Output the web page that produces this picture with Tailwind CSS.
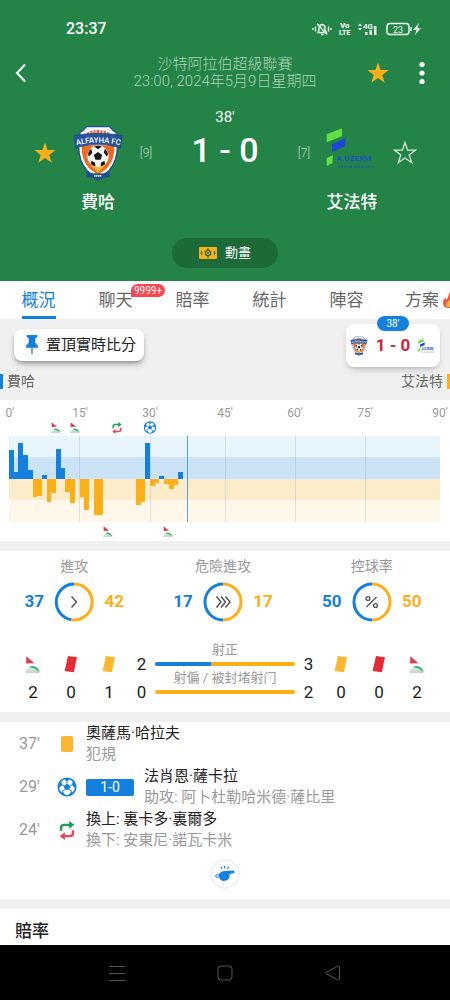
<!DOCTYPE html>
<html lang="zh-Hant">

<head>
    <meta charset="UTF-8">
    <meta name="viewport" content="width=device-width, initial-scale=1.0">
    <title>費哈 1 - 0 艾法特</title>

    <!-- Tailwind CSS -->
    <script src="https://cdn.jsdelivr.net/npm/@tailwindcss/browser@4"></script>
</head>

<body class="min-h-screen flex flex-col overflow-x-hidden bg-[#f0f0f0] text-[#222] font-['Roboto','Noto_Sans_CJK_TC',sans-serif]">

    <!-- Shared icons -->
    <svg class="hidden" aria-hidden="true">
        <symbol id="star" viewBox="0 0 24 24">
            <path d="M12 1.5l2.6 7.6h8L16.200 13.900l2.500 7.800L12 17l-6.700 4.700 2.500-7.800L1.400 9.100h8z" />
        </symbol>

        <symbol id="crest" viewBox="0 0 156 180">
            <path fill="#fff" stroke="#1f4f93" stroke-width="4" d="M42 8h72q8 12 20 18l4 44q0 46-26 74-16 16-34 28-18-12-34-28-26-28-26-74l4-44q12-6 20-18z" />
            <path fill="#e2632b" d="M44 26q34-14 68 0v8H44z" />
            <path stroke="#fff" stroke-width="3" d="M52 16v18M62 14v18M72 12v18M84 12v18M94 14v18M104 16v18" />
            <path fill="#f26a21" d="M27 66h102q2 46-24 72l-27 20-27-20Q25 112 27 66z" />
            <path fill="#f7b733" d="M56 128h44l-22 24z" />
            <circle cx="78" cy="100" r="33" fill="#fff" />
            <g fill="#151515">
                <path d="M78 87l13 9-5 15H70l-5-15z" />
                <path d="M66 70q12-5 24 0l-12 8zM47 92q3-10 10-15l3 12-10 13zM109 92q-3-10-10-15l-3 12 10 13zM56 124q6 6 14 8l-1-12-11-6zM100 124q-6 6-14 8l1-12 11-6z" />
            </g>
            <path fill="#27549d" stroke="#1a3f7e" stroke-width="2" d="M4 36q74-14 148 0l-5 40q-8-6-16-6-53-14-106 0-8 0-16 6z" />
            <path id="band" fill="none" d="M8 67q70-18 142 0" />
            <text font-size="24" font-weight="500" fill="#fff" text-anchor="middle"><textPath href="#band" startOffset="50%">ALFAYHA FC</textPath></text>
            <path fill="#1f4f93" d="M42 148q36 12 72 0v16q-18 2-36 12-18-10-36-12z" />
            <path stroke="#fff" stroke-width="5" stroke-dasharray="4 2" d="M66 161h24" />
        </symbol>

        <symbol id="striped" viewBox="0 0 156 132">
            <path fill="#63dd45" d="M2 22L48 4v24L2 46zM2 93l19-8-2 24-17 8z" />
            <path fill="#1d45d8" d="M18 52l40-18v23L18 75z" />
            <text x="32" y="101" font-size="24" font-weight="700" fill="#1d4fc4">A.UZEXM</text>
            <path stroke="#1d4fc4" stroke-width="6" stroke-dasharray="8 3 4 2" opacity=".6" d="M36 119h108" />
        </symbol>

        <symbol id="ball" viewBox="0 0 24 24">
            <circle cx="12" cy="12" r="10.500" fill="#fff" stroke="#1280dc" stroke-width="2" />
            <path fill="#1280dc" d="M12 7.800l4 2.900-1.500 4.700h-5L8 10.700zM8 2.200h8L12 5.500zM1.500 9.500L5 5l1.200 4.600L2 13.500zM22.500 9.500L19 5l-1.200 4.600L22 13.500zM5 20.500l1-4.500 4 5.800zM19 20.500l-1-4.500-4 5.800z" />
            <path fill="none" stroke="#1280dc" stroke-width="1.200" d="M12 5v3M6 9.500l2.200 1.200M18 9.500l-2.200 1.200M6.500 17l3-2M17.500 17l-3-2" />
        </symbol>

        <symbol id="swap" viewBox="0 0 44 54">
            <path fill="none" stroke="#22985a" stroke-width="7" d="M5 28v-8q0-9 9-9h18" />
            <path fill="#22985a" d="M28 0l15 11-15 11z" />
            <path fill="none" stroke="#ea4658" stroke-width="7" d="M39 26v8q0 9-9 9H12" />
            <path fill="#ea4658" d="M16 32L1 43l15 11z" />
        </symbol>

        <symbol id="corner" viewBox="0 0 48 52">
            <path fill="#e04050" d="M3 1l26 21-26 1z" />
            <path fill="#d5e9dc" d="M0 51q2-15 20-21 24 4 28 21z" />
            <path fill="#43b274" d="M12 34q10-7 22 0 9 6 10 16-9-10-32-16z" />
            <path fill="none" stroke="#b5bab7" stroke-width="2" d="M3 50q14-10 38 0z" />
        </symbol>

        <symbol id="card" viewBox="0 0 14 18">
            <path d="M4 1l9 1.200-3.200 15L.6 16z" />
        </symbol>
    </svg>

    <header class="bg-[#248347] text-white pb-[13px]">
        <!-- Status bar -->
        <div class="h-14 pt-[2px] flex items-center justify-between pl-[66px] pr-7">
            <span class="text-base font-medium">23:37</span>
            <div class="flex items-center gap-2 text-[#eaf8ee]">
                <svg class="w-5 h-4" viewBox="0 0 20 16" fill="none" stroke="currentColor" stroke-width="1.400">
                    <path d="M1 7v2M3.500 5.500v5M16.500 5.500v5M19 7v2M6 11.500h8.500L13 9V7q0-3-3-3.500Q7 4 7 7v2zM9 13.500h2.500M5 2.500l10 11" />
                </svg>
                <svg class="w-[10px] h-4 overflow-visible" viewBox="0 0 10 16" fill="currentColor" font-weight="900">
                    <text x="0" y="7" font-size="8">Vo</text>
                    <text x="-1" y="14" font-size="7">LTE</text>
                </svg>
                <svg class="w-5 h-4" viewBox="0 0 20 16" fill="currentColor" font-weight="700">
                    <path d="M0 5l2-2.500L4 5zM0 7l2 2.500L4 7zM7 11h2.500v3H7zM11.500 9H14v5h-2.500zM16 5h2.500v9H16z" />
                    <text x="5" y="8" font-size="8">4G</text>
                </svg>
                <svg class="w-9 h-4" viewBox="0 0 36 16" fill="none" stroke="currentColor">
                    <rect x="1" y="2.500" width="22" height="11" rx="3" stroke-width="1.500" />
                    <path stroke-width="1.500" d="M25 6v4" />
                    <text x="12" y="11.500" font-size="9" text-anchor="middle" fill="currentColor" stroke="none">23</text>
                    <path fill="currentColor" stroke="none" d="M33 2l-6 7h3.500L29 14l6-7h-3.500z" />
                </svg>
            </div>
        </div>

        <!-- League and kick-off -->
        <div class="grid grid-cols-[88px_1fr_88px] items-center">
            <button type="button" aria-label="返回" class="w-11 h-8 pl-3 cursor-pointer">
                <svg class="w-5 h-5" viewBox="0 0 20 20" fill="none" stroke="#fff" stroke-width="2">
                    <path d="M13 1.500L5 10l8 8.500" />
                </svg>
            </button>
            <p class="text-center text-[15px] leading-[17px] font-light text-[#a9d3b6] whitespace-nowrap">沙特阿拉伯超級聯賽<br>23:00, 2024年5月9日星期四</p>
            <div class="flex justify-between items-center pl-1 pr-5">
                <button type="button" aria-label="收藏比賽" class="cursor-pointer"><svg class="w-6 h-6 fill-[#fdaf17]"><use href="#star" /></svg></button>
                <button type="button" aria-label="更多" class="cursor-pointer">
                    <svg class="w-4 h-6 fill-white" viewBox="0 0 16 24">
                        <circle cx="8" cy="3.500" r="2.600" />
                        <circle cx="8" cy="12" r="2.600" />
                        <circle cx="8" cy="20.500" r="2.600" />
                    </svg>
                </button>
            </div>
        </div>

        <!-- Score -->
        <p class="mt-5 text-center text-[15px] leading-[14px]">38'</p>
        <div class="grid grid-cols-[22px_84px_12px_1fr_12px_84px_22px] items-center justify-items-center px-[34px]">
            <button type="button" aria-label="收藏費哈" class="cursor-pointer"><svg class="w-6 h-6 fill-[#fdaf17]"><use href="#star" /></svg></button>
            <svg class="w-[54px] h-[58px]"><use href="#crest" /></svg>
            <span class="text-xs font-light text-[#b9dcc4]">[9]</span>
            <strong class="self-start text-[34px] leading-[52px] font-medium">1 - 0</strong>
            <span class="text-xs font-light text-[#b9dcc4]">[7]</span>
            <svg class="self-start w-[52px] h-[50px]"><use href="#striped" /></svg>
            <button type="button" aria-label="收藏艾法特" class="cursor-pointer"><svg class="w-6 h-6 fill-none stroke-[#d5ecdc]" stroke-width="1.300"><use href="#star" /></svg></button>
            <span class="col-start-2 mt-2 text-[17px] leading-6 font-medium">費哈</span>
            <span class="col-start-6 mt-2 text-[17px] leading-6 font-medium">艾法特</span>
        </div>
        <button type="button" class="mt-6 mx-auto w-[106px] h-[30px] rounded-full bg-[#1d6a39] flex items-center justify-center gap-2 text-[13px] cursor-pointer">
            <svg class="w-[18px] h-3" viewBox="0 0 18 12">
                <rect width="18" height="12" rx="1" fill="#fdaf17" />
                <path fill="none" stroke="#1d6a39" stroke-width="1.200" d="M9 1v10M2.500 4v4M15.500 4v4" />
                <circle cx="9" cy="6" r="2.700" fill="#fdaf17" stroke="#1d6a39" stroke-width="1.300" />
                <circle cx="9" cy="6" r="1" fill="#1d6a39" />
            </svg>
            動畫
        </button>
    </header>

    <!-- Tabs -->
    <nav class="bg-white flex h-[38px] overflow-hidden text-[17px] leading-[38px] text-center text-[#666]">
        <a href="#" class="w-[77px] shrink-0 flex justify-center text-[#1280dc]"><span class="border-b-3 border-[#1280dc]">概況</span></a>
        <a href="#" class="w-[77px] shrink-0 relative">聊天
            <span class="absolute left-[54px] top-[3px] h-[13px] px-[3px] rounded-full rounded-bl-none bg-[#fb4550] text-white text-[10px] leading-[13px]">9999+</span>
        </a>
        <a href="#" class="w-[77px] shrink-0">賠率</a>
        <a href="#" class="w-[77px] shrink-0">統計</a>
        <a href="#" class="w-[77px] shrink-0">陣容</a>
        <a href="#" class="w-[77px] shrink-0 flex items-center pl-5 gap-1">方案
            <svg class="w-3 h-4 shrink-0" viewBox="0 0 12 16">
                <path fill="#f0573c" d="M6 0q1 3 4 6 2 2 2 5 0 5-6 5T0 11q0-3 2.500-6L3 8q3-3 3-8z" />
                <path fill="#ffb43a" d="M6 8q3 3 3 5 0 2-3 2t-3-2q0-2 3-5z" />
            </svg>
        </a>
    </nav>

    <!-- Pin score and live score card -->
    <section class="h-[81px]">
        <div class="flex justify-between items-start pt-[5px] pl-[14px] pr-[10px]">
            <button type="button" class="mt-[5px] h-8 px-2 rounded-lg bg-white shadow-md shadow-black/30 flex items-center gap-1 text-[15px] cursor-pointer">
                <svg class="w-5 h-5 fill-[#1280dc]" viewBox="0 0 40 60">
                    <path d="M4 0h32v6l-6 4v14l8 8v6H22v16l-2 6-2-6V38H2v-6l8-8V10L4 6z" />
                </svg>
                置頂實時比分
            </button>
            <div class="relative w-[94px] h-[43px] rounded-lg bg-white shadow-md shadow-black/15 flex items-center justify-between px-1">
                <span class="absolute -top-2 left-1/2 -translate-x-1/2 w-8 h-[15px] rounded-full bg-[#1280dc] text-white text-[10px] leading-[15px] text-center">38'</span>
                <svg class="w-[18px] h-5"><use href="#crest" /></svg>
                <strong class="text-[17px] font-bold text-[#cf1f36] whitespace-nowrap">1 - 0</strong>
                <svg class="w-[18px] h-4"><use href="#striped" /></svg>
            </div>
        </div>
        <div class="flex justify-between mt-[5px] h-[18px] text-sm text-[#666]">
            <span class="border-l-3 border-[#1280dc] h-[15px] leading-[15px] mt-[2px] pl-1">費哈</span>
            <span class="border-r-3 border-[#fdaf17] h-[15px] leading-[15px] mt-[2px] pr-1">艾法特</span>
        </div>
    </section>

    <!-- Momentum chart -->
    <section class="bg-white h-[141px] pt-1">
        <div class="grid grid-cols-[70fr_70fr_75fr_70fr_70fr_75fr_20px] text-xs leading-[18px] text-[#999]">
            <span class="w-5 text-center">0'</span>
            <span class="w-5 text-center">15'</span>
            <span class="w-5 text-center">30'</span>
            <span class="w-5 text-center">45'</span>
            <span class="w-5 text-center">60'</span>
            <span class="w-5 text-center">75'</span>
            <span class="w-5 text-center">90'</span>
        </div>
        <div class="mr-[10px] ml-[9px]">
            <!-- Home events, placed along the time axis -->
            <div class="relative h-[14px]">
                <svg class="absolute -translate-x-1/2 top-0 w-[10px] h-[11px]" style="left: 10.9%"><use href="#corner" /></svg>
                <svg class="absolute -translate-x-1/2 top-0 w-[10px] h-[11px]" style="left: 15.3%"><use href="#corner" /></svg>
                <svg class="absolute -translate-x-1/2 top-0 w-[10px] h-3" style="left: 25.1%"><use href="#swap" /></svg>
                <svg class="absolute -translate-x-1/2 -top-px w-[13px] h-[13px]" style="left: 32.8%"><use href="#ball" /></svg>
            </div>
            <svg class="block w-full h-[86px]" viewBox="0 0 431 86" preserveAspectRatio="none" shape-rendering="crispEdges">
                <path fill="#e9f5fd" d="M0 0h431v21H0z" />
                <path fill="#cbe3f6" d="M0 21h431v22H0z" />
                <path fill="#fdecca" d="M0 43h431v21H0z" />
                <path fill="#fff7e9" d="M0 64h431v22H0z" />
                <path fill="#8899aa" fill-opacity=".25" d="M70 0h1v86h-1zM141 0h1v86h-1zM216 0h1v86h-1zM286 0h1v86h-1zM356 0h1v86h-1z" />
                <path fill="#1280dc" d="M0 43V14H5V36H9V7H14V19H19V34H24V43zM33 43v-4h5v4zM47 43V13H52V32H56V43zM136 43V7h5v36zM150 43v-3h5v3zM169 43v-7h5v7z" />
                <path fill="#fdaf17" d="M24 43V61H28V60H33V43zM38 43V66H42V57H47V43zM56 43V56H61V67H66V43zM71 43V61H75V74H80V43zM85 43V79H94V43zM127 43V69h5V66h4V43zM141 43V50h5V47h4V43zM155 43V48h5V53h5V49h4V43z" />
                <path fill="#5b9fdd" d="M178 0h1v86h-1z" />
            </svg>
            <!-- Away events -->
            <div class="relative h-[14px]">
                <svg class="absolute -translate-x-1/2 top-1 w-[10px] h-[11px]" style="left: 22.9%"><use href="#corner" /></svg>
                <svg class="absolute -translate-x-1/2 top-1 w-[10px] h-[11px]" style="left: 37%"><use href="#corner" /></svg>
            </div>
        </div>
    </section>

    <!-- Stats -->
    <section class="mt-[10px] bg-white h-[161px]">
        <div class="grid grid-cols-3 pt-[6px] pr-1 text-center">
            <div>
                <h3 class="text-sm leading-[18px] text-[#999]">進攻</h3>
                <div class="mt-[7px] flex items-center justify-center text-[17px] font-bold">
                    <span class="w-10 text-[#1280dc]">37</span>
                    <svg class="w-10 h-10" viewBox="0 0 40 40" fill="none" stroke-width="3">
                        <path stroke="#fdaf17" d="M20 2a18 18 0 1 1-3.600 35.600" />
                        <path stroke="#1280dc" d="M20 2a18 18 0 0 0-3 35.700" />
                        <path stroke="#555" stroke-width="1.500" d="M17.500 14.500l5 5.500-5 5.500" />
                    </svg>
                    <span class="w-10 text-[#fdaf17]">42</span>
                </div>
            </div>
            <div>
                <h3 class="text-sm leading-[18px] text-[#999]">危險進攻</h3>
                <div class="mt-[7px] flex items-center justify-center text-[17px] font-bold">
                    <span class="w-10 text-[#1280dc]">17</span>
                    <svg class="w-10 h-10" viewBox="0 0 40 40" fill="none" stroke-width="3">
                        <path stroke="#fdaf17" d="M20 2a18 18 0 0 1 0 36" />
                        <path stroke="#1280dc" d="M20 2a18 18 0 0 0 0 36" />
                        <path stroke="#555" stroke-width="1.500" d="M13.500 14.500l4.500 5.500-4.500 5.500M18 14.500l4.500 5.500-4.500 5.500M22.500 14.500L27 20l-4.500 5.500" />
                    </svg>
                    <span class="w-10 text-[#fdaf17]">17</span>
                </div>
            </div>
            <div>
                <h3 class="text-sm leading-[18px] text-[#999]">控球率</h3>
                <div class="mt-[7px] flex items-center justify-center text-[17px] font-bold">
                    <span class="w-10 text-[#1280dc]">50</span>
                    <svg class="w-10 h-10" viewBox="0 0 40 40" fill="none" stroke-width="3">
                        <path stroke="#fdaf17" d="M20 2a18 18 0 0 1 0 36" />
                        <path stroke="#1280dc" d="M20 2a18 18 0 0 0 0 36" />
                        <path stroke="#555" stroke-width="1.500" d="M24.500 15l-10 10" />
                        <circle cx="16" cy="16.500" r="1.900" stroke="#555" stroke-width="1.400" />
                        <circle cx="23.500" cy="23.500" r="1.900" stroke="#555" stroke-width="1.400" />
                    </svg>
                    <span class="w-10 text-[#fdaf17]">50</span>
                </div>
            </div>
        </div>

        <!-- Corners, cards and shots -->
        <div class="mt-[19px] px-[14px] flex items-end text-[17px] leading-7 text-center">
            <div class="grid grid-cols-[38px_38px_38px_27px] justify-items-center items-center">
                <svg class="w-4 h-[17px]"><use href="#corner" /></svg>
                <svg class="w-[14px] h-[18px] fill-[#e62b34]"><use href="#card" /></svg>
                <svg class="w-[14px] h-[18px] fill-[#fdb72f]"><use href="#card" /></svg>
                <span>2</span>
                <span>2</span>
                <span>0</span>
                <span>1</span>
                <span>0</span>
            </div>
            <div class="flex-1 flex flex-col gap-[3px] pb-3 text-[13px] leading-[18px] text-[#999]">
                <span>射正</span>
                <div class="h-1 rounded-full bg-[#fdaf17] overflow-hidden">
                    <div class="h-full bg-[#1280dc]" style="width: 40%"></div>
                </div>
                <span class="whitespace-nowrap">射偏 / 被封堵射门</span>
                <div class="h-1 rounded-full bg-[#fdaf17]"></div>
            </div>
            <div class="grid grid-cols-[27px_38px_38px_38px] justify-items-center items-center">
                <span>3</span>
                <svg class="w-[14px] h-[18px] fill-[#fdb72f]"><use href="#card" /></svg>
                <svg class="w-[14px] h-[18px] fill-[#e62b34]"><use href="#card" /></svg>
                <svg class="w-4 h-[17px]"><use href="#corner" /></svg>
                <span>2</span>
                <span>0</span>
                <span>0</span>
                <span>2</span>
            </div>
        </div>
    </section>

    <!-- Match events -->
    <section class="mt-[10px] bg-white pt-px pb-[10px] text-[15px] leading-[21px]">
        <ul class="flex flex-col gap-px">
            <li class="flex items-center">
                <span class="w-12 pl-[19px] text-base text-[#999]">37'</span>
                <span class="w-[38px] flex justify-center"><span class="w-3 h-4 rounded-xs bg-[#fdb72f]"></span></span>
                <p>奧薩馬·哈拉夫<br><span class="text-[#999]">犯規</span></p>
            </li>
            <li class="flex items-center">
                <span class="w-12 pl-[19px] text-base text-[#999]">29'</span>
                <span class="w-[38px] flex justify-center"><svg class="w-5 h-5"><use href="#ball" /></svg></span>
                <span class="w-12 mr-[10px] rounded-xs bg-[#1280dc] text-white text-sm leading-[17px] text-center">1-0</span>
                <p>法肖恩·薩卡拉<br><span class="text-[#999]">助攻: 阿卜杜勒哈米德·薩比里</span></p>
            </li>
            <li class="flex items-center">
                <span class="w-12 pl-[19px] text-base text-[#999]">24'</span>
                <span class="w-[38px] flex justify-center"><svg class="w-4 h-[19px]"><use href="#swap" /></svg></span>
                <p>換上: 裏卡多·裏爾多<br><span class="text-[#999]">換下: 安東尼·諾瓦卡米</span></p>
            </li>
        </ul>
        <div class="mt-2 mx-auto w-[30px] h-[30px] rounded-full border-2 border-[#eef3f6] flex items-center justify-center">
            <svg class="w-5 h-4" viewBox="0 0 20 16">
                <path fill="#1280dc" d="M4 8q2-3 6-3l9-.5.5 2.500-5 1q1 6-5.500 7-4 0-5-4.500z" />
                <ellipse cx="2.500" cy="10" rx="1.900" ry="1.300" fill="none" stroke="#1280dc" />
                <path stroke="#1280dc" stroke-width="1.200" d="M6 .8l1 2M9.700 0v2.500M13.500 .8l-1 2" />
            </svg>
        </div>
    </section>

    <!-- Odds -->
    <section class="mt-[10px] bg-white flex-1 pt-[11px] pl-[15px]">
        <h2 class="text-[17px] leading-[22px] font-medium">賠率</h2>
    </section>

    <!-- System navigation -->
    <footer class="bg-black h-[55px] flex items-center justify-center gap-[86px]">
        <button type="button" aria-label="最近">
            <svg class="w-[22px] h-4" viewBox="0 0 22 16" stroke="#555"><path d="M3 1.500h16M3 8.500h16M3 15.500h16" /></svg>
        </button>
        <button type="button" aria-label="主頁">
            <svg class="w-[22px] h-4" viewBox="0 0 22 16" fill="none" stroke="#555"><rect x="4" y="1" width="14" height="14" rx="3" /></svg>
        </button>
        <button type="button" aria-label="返回上頁">
            <svg class="w-[22px] h-4" viewBox="0 0 22 16" fill="none" stroke="#555"><path stroke-linejoin="round" d="M17.500 1.500v13q-1 1-2 .3L4 8.500q-.5-.5 0-1L15.500 1.200q1-.7 2 .3z" /></svg>
        </button>
    </footer>

</body>

</html>
